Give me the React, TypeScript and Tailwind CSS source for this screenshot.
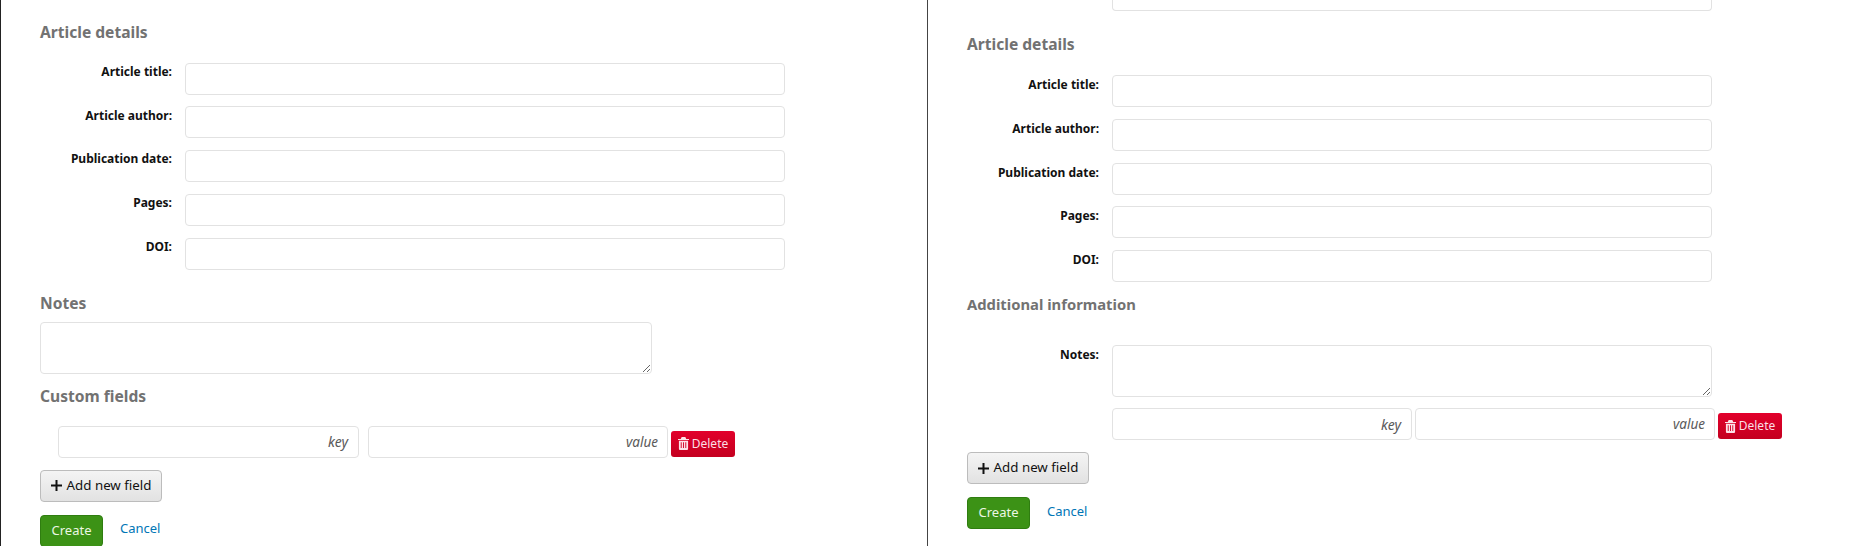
const FONT = "font-['Noto_Sans','Open_Sans',sans-serif]";

function Heading({ children, className = "" }: { children: React.ReactNode; className?: string }) {
  return <h3 className={`leading-[22px] font-bold text-[#727272] ${className}`}>{children}</h3>;
}

function Field({ label, labelPad }: { label: string; labelPad: string }) {
  return (
    <div className="flex h-[32px]">
      <label className={`w-[132px] ${labelPad} text-right text-[12px] leading-[16px] font-bold text-[#111111]`}>{label}</label>
      <input className="ml-[13px] h-[32px] w-[600px] rounded-[4px] border border-[#e2e2e2] bg-white" />
    </div>
  );
}

function Trash() {
  return (
    <svg viewBox="0 0 12 14" className="h-[13px] w-[11px] fill-[#fde3e8]" aria-hidden="true">
      <path d="M4 0h4l1 2h3v1.2H0V2h3z" />
      <path fillRule="evenodd" d="M1 4h10v8.6c0 .8-.6 1.4-1.4 1.4H2.400c-.8 0-1.400-.6-1.400-1.400zM3 5.500v6.500h1V5.500zM5.500 5.500v6.500h1V5.500zM8 5.500v6.500h1V5.500z" />
    </svg>
  );
}

function KeyValue({ keyWidth, gap }: { keyWidth: string; gap: string }) {
  return (
    <div className="flex items-end">
      <div className={`flex h-[32px] ${keyWidth} items-center justify-end rounded-[4px] border border-[#e2e2e2] bg-white pr-[10px] text-[14px] italic text-[#595959]`}>key</div>
      <div className={`${gap} flex h-[32px] w-[300px] items-center justify-end rounded-[4px] border border-[#e2e2e2] bg-white pr-[9px] text-[13.500px] italic text-[#595959]`}>value</div>
      <button className="mb-[1px] ml-[3px] flex h-[26px] w-[64px] items-center justify-center gap-[3px] rounded-[3px] bg-gradient-to-b from-[#e2002b] to-[#c4001f] text-[12px] text-[#fbdfe4]">
        <Trash />
        Delete
      </button>
    </div>
  );
}

function Actions({ cancelShift }: { cancelShift: string }) {
  return (
    <>
      <button className="flex h-[32px] w-[122px] items-center justify-center gap-[5px] rounded-[4px] border border-[#bcbcbc] bg-gradient-to-b from-[#f4f4f4] to-[#e2e2e2] text-[13.300px] text-[#111111]">
        <svg viewBox="0 0 11 11" className="h-[11px] w-[11px] stroke-[#111111] stroke-[2]" aria-hidden="true">
          <path d="M5.500 0v11M0 5.500h11" />
        </svg>
        Add new field
      </button>
      <div className="mt-[13px] flex items-center">
        <button className="flex h-[32px] w-[63px] items-center justify-center rounded-[4px] border border-[#2f7d10] bg-[#3c9216] text-[13px] text-[#ecf7e4]">Create</button>
        <a className={`${cancelShift} ml-[17px] text-[13px] text-[#0076b6]`}>Cancel</a>
      </div>
    </>
  );
}

const TITLES = ["Article title:", "Article author:", "Publication date:", "Pages:", "DOI:"];

function ArticleFields({ labelPad }: { labelPad: string }) {
  return (
    <div className="flex flex-col gap-[11.750px]">
      {TITLES.map((t) => (
        <Field key={t} label={t} labelPad={labelPad} />
      ))}
    </div>
  );
}

export default function App() {
  return (
    <div className={`flex h-[546px] w-[1855px] overflow-hidden bg-white ${FONT}`}>
      <section className="h-full w-[927px] border-l border-[#222222] pl-[39px] pt-[21px]">
        <Heading className="text-[15.600px]">Article details</Heading>
        <div className="mt-[19.600px]">
          <ArticleFields labelPad="pt-[1.400px]" />
        </div>
        <Heading className="mt-[22.400px] text-[15.600px]">Notes</Heading>
        <textarea className="mt-[8px] block h-[52px] w-[612px] rounded-[4px] border border-[#e2e2e2] bg-white" />
        <Heading className="mt-[11px] text-[15.600px]">Custom fields</Heading>
        <div className="ml-[18px] mt-[19px]">
          <KeyValue keyWidth="w-[301px]" gap="ml-[9px]" />
        </div>
        <div className="mt-[12px]">
          <Actions cancelShift="-mt-[4px]" />
        </div>
      </section>
      <section className="h-full flex-1 border-l border-[#444444] pl-[39px]">
        <div className="ml-[145px] h-[11px] w-[600px] rounded-b-[4px] border border-t-0 border-[#e2e2e2]" />
        <Heading className="mt-[22px] text-[15.600px]">Article details</Heading>
        <div className="mt-[20px]">
          <ArticleFields labelPad="pt-[2px]" />
        </div>
        <Heading className="mt-[11px] text-[14.800px]">Additional information</Heading>
        <div className="mt-[30px] flex">
          <label className="w-[132px] pt-[2px] text-right text-[12px] leading-[16px] font-bold text-[#111111]">Notes:</label>
          <textarea className="ml-[13px] block h-[52px] w-[600px] rounded-[4px] border border-[#e2e2e2] bg-white" />
        </div>
        <div className="ml-[145px] mt-[11px]">
          <KeyValue keyWidth="w-[300px]" gap="ml-[3px]" />
        </div>
        <div className="mt-[12px]">
          <Actions cancelShift="-mt-[3px]" />
        </div>
      </section>
    </div>
  );
}
